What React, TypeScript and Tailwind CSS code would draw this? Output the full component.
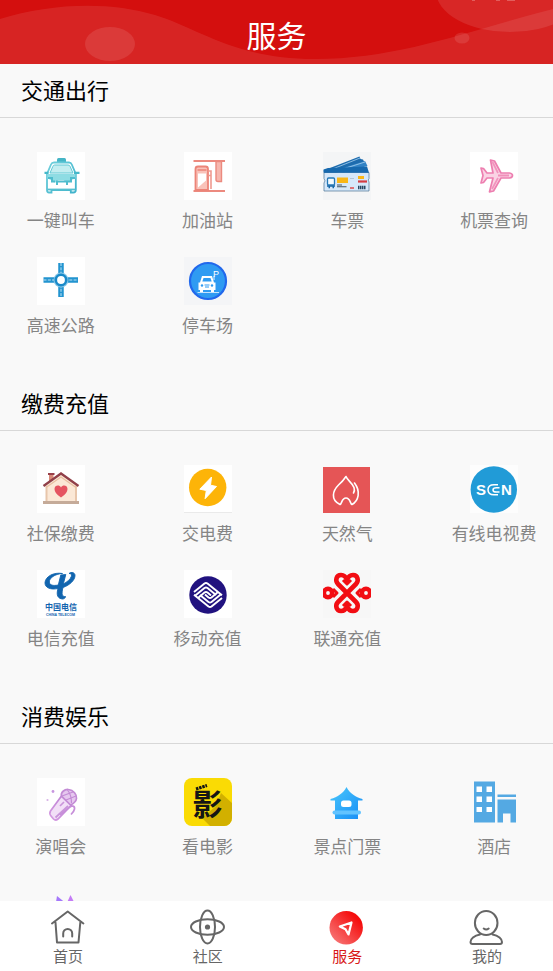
import type { ReactNode } from 'react';

interface Service {
  label?: string;
  icon: ReactNode;
}

interface Section {
  title: string;
  services: Service[];
}

interface IconProps {
  bg?: string;
  children: ReactNode;
}

const Icon = ({ bg = 'none', children }: IconProps) => (
  <svg viewBox="0 0 48 48" className="h-12 w-12 shrink-0" aria-hidden="true">
    <rect width="48" height="48" fill={bg} />
    {children}
  </svg>
);

const TaxiIcon = () => (
  <Icon bg="#fff">
    <defs>
      <linearGradient id="taxi" x1="0" y1="0" x2="1" y2="1">
        <stop offset="0" stopColor="#6fd0dc" />
        <stop offset="1" stopColor="#3fb2cb" />
      </linearGradient>
    </defs>
    <path d="M20 10V7.500q0-1.500 1.500-1.500h6q1.500 0 1.500 1.500V10z" fill="#45b5c6" />
    <path d="M17 10.500h15q2 0 2.800 2l4 9.500v16q0 2.500-2.500 2.500h-2.500V38H14.500v2.500H12q-2 0-2-2.500V22l4-9.500q.800-2 3-2z" fill="#fff" stroke="url(#taxi)" strokeWidth="1.800" />
    <path d="M17.500 13h13.500q1.500 0 2 1.200l3 6.800H13l2.800-6.500q.500-1.500 1.700-1.500z" fill="#c3edf0" stroke="#62c8d5" strokeWidth="1" />
    <path d="M10.500 22h28v4.500l-4.500 1.500v2h-5l-2.500-2h-5l-3 2.500-4.500-1V28l-3.500-1.500z" fill="#8edce3" />
    <path d="M7.500 20.800h4M37 20.800h5.500" stroke="#45b8c9" strokeWidth="2.200" />
    <path d="M11 26h4v3.500h3M38 26h-4v3.500h-3M20 33v-3.500h10V33" fill="none" stroke="#4fbccd" strokeWidth="2" />
    <path d="M10.500 37.500h28" stroke="#55bfd0" strokeWidth="1.800" />
  </Icon>
);

const FuelIcon = () => (
  <Icon bg="#fff">
    <path d="M9.500 9H41M9.500 39H41" stroke="#ec8a7f" strokeWidth="2.200" />
    <path d="M32 9.500h5.500v20H34q-2 0-2-2z" fill="#f6b7ae" stroke="#ec8a7f" strokeWidth="1.400" />
    <path d="M11.500 38V17q0-2.500 2.500-2.500h7.500q2.500 0 2.500 2.500v21z" fill="#f9c2b9" stroke="#ec8478" strokeWidth="1.800" />
    <path d="M14 21.500h8v7l-8 7z" fill="#fff" />
    <path d="M13.500 18h9" stroke="#ed8e83" strokeWidth="1.800" />
    <path d="M24.500 19h2.500v4.500h-2.500M27 24v13" fill="none" stroke="#ef9a90" strokeWidth="1.600" />
  </Icon>
);

const TicketIcon = () => (
  <Icon bg="#f4f5f6">
    <path d="M.500 18.500 36.500 4.500l1 2.500 2.500.500 1.500 3-30 11H1z" fill="#1e6cae" />
    <path d="m13 18 29-9 2.500 5-24 6.500z" fill="#3283c5" />
    <path d="m6 18.500 31-12.500M12 19.500l30-9.500M20 20l23-5" stroke="#a9d2f0" strokeWidth=".8" />
    <path d="M1 20.500h45v6q-1.500 1.500 0 3.500v9H1v-8q2-2 0-4.500z" fill="#d6e8fa" stroke="#4a7294" strokeWidth=".7" />
    <path d="M.500 17.500 5 16l39-1.500 2 6.200H.800z" fill="#1769ae" />
    <rect x="4.500" y="26" width="7" height="7" rx="1" fill="#f2faff" stroke="#2479b8" strokeWidth="1.300" />
    <path d="M4 34h8M5.500 35.500h1.500M9.500 35.500H11" stroke="#1968a8" strokeWidth="1.600" />
    <rect x="14" y="25.500" width="11" height="5.500" fill="#f9b718" />
    <path d="M14 33h5M14 34.700h9.500" stroke="#455766" strokeWidth="1.100" />
    <path d="M27 26.500h4" stroke="#a9bdd0" strokeWidth=".8" />
    <rect x="35" y="24" width="6" height="3" fill="#f9b718" />
    <path d="M35 29.500h9" stroke="#d63c42" strokeWidth="2.200" />
    <path d="M27 36h4" stroke="#dc4d4d" strokeWidth="1.500" />
    <path d="M35 35.500h8" stroke="#284963" strokeWidth="3.500" strokeDasharray="1.500 .5" />
  </Icon>
);

const PlaneIcon = () => (
  <Icon bg="#fff">
    <path d="m20.500 8 4 1 6.500 12h8.500q3 .500 3 2.500t-3 2.500H31l-7.500 13-4 .800L23 26h-6l-3.500 4.500-2.500.500 2-7.500-2-7.500 2.500.500 3.500 4.500h6z" fill="#fad3e4" stroke="#ed7fb0" strokeWidth="1.700" strokeLinejoin="round" />
    <path d="M22.500 10 28 21M22 37l6-11" stroke="#f194bd" strokeWidth="1.700" />
    <path d="M28 23.500h11" stroke="#f08fbb" strokeWidth="2" />
  </Icon>
);

const RoadIcon = () => (
  <Icon bg="#fff">
    <path d="M24 6v34M6.500 23H41" stroke="#2294d0" strokeWidth="5.500" />
    <path d="M24 6v34M6.500 23H41" stroke="#bfe2f3" strokeWidth="1" strokeDasharray="3 1.300" />
    <circle cx="24" cy="23" r="7.500" fill="#8ac8e8" />
    <circle cx="24" cy="23" r="5.200" fill="#fff" stroke="#1a8ac9" strokeWidth="2.600" />
  </Icon>
);

const ParkingIcon = () => (
  <Icon bg="#f4f5f7">
    <circle cx="24" cy="24" r="18" fill="#2f9bf2" stroke="#2168ec" strokeWidth="2.200" />
    <path d="M14.500 25.500h1.500l2-6.500h10l2 6.500h1.500v7.500h-1.500v2.500h-3V33h-8v2.500h-3V33h-1.500z" fill="#fff" />
    <path d="m18.300 24.500 1.200-3.500h7l1.200 3.500z" fill="#2f9bf2" />
    <circle cx="18" cy="28.500" r="1.200" fill="#2f9bf2" />
    <circle cx="28" cy="28.500" r="1.200" fill="#2f9bf2" />
    <path d="M20.500 28h5M21 30h4" stroke="#2f9bf2" strokeWidth="1" />
    <path d="M13.500 35.500H35" stroke="#c4e3ff" strokeWidth="1" />
    <text x="29" y="20" fill="#fff" fontSize="9" fontFamily="'Liberation Sans', sans-serif">P</text>
    <path d="M30 19v4" stroke="#fff" strokeWidth=".9" />
  </Icon>
);

const HouseIcon = () => (
  <Icon bg="#fff">
    <path d="M12 9h4.500v7H12z" fill="#d98a79" />
    <path d="M11 8h6.500v2H11z" fill="#98404a" />
    <path d="M10 20 24 9l14.500 11v16H10z" fill="#fbe8d6" />
    <path d="M9.500 20.500V36M39 20.500V36" stroke="#e8c6ab" strokeWidth="2" />
    <path d="M6.500 21 24 8.500 41.500 21" fill="none" stroke="#914049" strokeWidth="2.300" />
    <path d="M9 22.500 24 12l15 10.500" fill="none" stroke="#e9bfa1" strokeWidth="1.200" />
    <path d="M6 36h36v3H6z" fill="#c5ab99" />
    <path d="M24 32.500q-6.500-4-6.500-8.500c0-4 5-4.500 6.500-1.500 1.500-3 6.500-2.500 6.500 1.500q0 4.500-6.500 8.500z" fill="#e55460" />
  </Icon>
);

const PowerIcon = () => (
  <Icon bg="#fff">
    <path d="M0 47.500h48" stroke="#eaeaea" />
    <circle cx="23.700" cy="22.500" r="18.700" fill="#fdb408" />
    <path d="M27.500 12 15.800 24.200l6.500 1.300-1.200 8.200L32.500 21.500l-6-1.300z" fill="#fff" stroke="#fff" strokeLinejoin="round" />
  </Icon>
);

const GasIcon = () => (
  <Icon>
    <rect y="2" width="47" height="46" fill="#e55556" />
    <path d="M17 39.500c-10-5-7-14-1.500-19.500 3.500-3 5.500-5.500 7.500-8.500 1.500 4 6.500 6.500 8 11 .800 2.500.500 4-.500 5.500M31.500 18c6.500 8.500 4 18-2.500 21.500-2-.500-1.500-6.500-6-6.500s-4 6-6 6.500" fill="none" stroke="#fff" strokeWidth="1.600" strokeLinecap="round" strokeLinejoin="round" />
  </Icon>
);

const CableIcon = () => (
  <Icon bg="#fdfdfd">
    <circle cx="23.800" cy="24.500" r="23.200" fill="#219bd7" />
    <g fill="#fff" fontSize="15" fontWeight="700" fontFamily="'Liberation Sans', sans-serif">
      <text x="6" y="30">S</text>
      <text x="31" y="30">N</text>
    </g>
    <path d="M28 19.800h-4q-6 0-6 5t6 5h4M29.500 22.800h-3q-3.500 0-3.500 2.100t3.500 2.100h3" fill="none" stroke="#fff" strokeWidth="1.500" />
  </Icon>
);

const TelecomIcon = () => (
  <Icon bg="#fff">
    <path d="M25.500 3.500c-9-1.500-17 3-17.500 9-.300 5.500 6 7.500 13 6-2 7 0 10 4.500 10.500 1.500 0 3-1 3-2.500-3 .500-4.500-2-2.500-9 7-2.500 12-7.500 12-12 0-3-3.500-4-6-2 2-.200 3 1 2.300 3-1 3-4.300 5.500-8 7.500l2.500-9.500-5 .500-2.500 10c-5 1-9 .300-9-3 0-4 5.500-8 13.200-8.500z" fill="#1265af" stroke="#1265af" strokeWidth=".9" strokeLinejoin="round" />
    <text x="24" y="40" textAnchor="middle" fill="#1265af" fontSize="8" fontWeight="700" fontFamily="'Noto Sans CJK SC', sans-serif">中国电信</text>
    <text x="23.500" y="46" textAnchor="middle" fill="#1265af" fontSize="3.500" fontWeight="700" fontFamily="'Liberation Sans', sans-serif">CHINA TELECOM</text>
  </Icon>
);

const MobileIcon = () => (
  <Icon bg="#fff">
    <circle cx="24" cy="25" r="18.700" fill="#21127f" />
    <g fill="none" stroke="#fff" strokeWidth="1.900" strokeLinejoin="round">
      <path d="M10 22 20.500 13.500q1.500-1 3 0L38 25.300M11 25.800l9.500-7.800q1.500-1 3 0L32 25M14 27.900l6.500-5.400q1.500-1 3 0L27 25.500" />
      <path d="M38 28 27.500 36.500q-1.500 1-3 0L10 24.700M37 24.200l-9.500 7.800q-1.500 1-3 0L16 25M34 22.100l-6.500 5.400q-1.500 1-3 0L21 24.500" />
    </g>
  </Icon>
);

const UnicomIcon = () => (
  <Icon bg="#f7f7f7">
    <g fill="none" stroke="#f20d13" strokeWidth="4.600" strokeLinejoin="round">
      <path d="M24 23 15 14c-3-3-2-9 3-9 3 0 5 2 6 5 1-3 3-5 6-5 5 0 6 6 3 9L15 32c-3 3-2 9 3 9 3 0 5-2 6-5 1 3 3 5 6 5 5 0 6-6 3-9z" />
      <circle cx="5" cy="23" r="4.200" />
      <circle cx="43" cy="23" r="4.200" />
      <path d="m10 19 4 4-4 4M38 19l-4 4 4 4M20 10l4 4 4-4M20 36l4-4 4 4" strokeWidth="3" />
    </g>
  </Icon>
);

const MicIcon = () => (
  <Icon bg="#fff">
    <defs>
      <linearGradient id="mic" x1="0" y1="1" x2="1" y2="0">
        <stop offset="0" stopColor="#d59ae2" />
        <stop offset="1" stopColor="#b87dd0" />
      </linearGradient>
    </defs>
    <path d="m24.500 18-11 15q-1.500 2.500.500 5l2.500 3q2 2 4.500 0L34.500 27z" fill="#f2dff7" stroke="url(#mic)" strokeWidth="1.700" />
    <path d="m23 28 4-4M18.500 39.500 31 28" stroke="#c994da" strokeWidth="1.700" />
    <path d="M24.500 18c-1-3.500 3-7 7-6.500 5 .500 8.500 5 8 9-.500 4-3 5-6 6.500z" fill="#e6c8ef" stroke="#c38bd5" strokeWidth="1.700" />
    <path d="m25 18 11-4M29 22l10-4M30.500 12q4 5 4 13" fill="none" stroke="#c38bd5" strokeWidth="1.200" />
    <path d="M23 37q6-5 9-7.500c3-2.500 6-1.500 5.500 1.500-.300 2-1.500 3.500-3.500 5.500" fill="none" stroke="#c78fd9" strokeWidth="1.700" />
    <circle cx="16" cy="13.500" r="1.400" fill="#c796df" />
    <circle cx="10.500" cy="22" r="1.100" fill="#d8b2e6" />
  </Icon>
);

const MovieIcon = () => (
  <svg viewBox="0 0 48 48" className="h-12 w-12 shrink-0 rounded-lg" aria-hidden="true">
    <rect width="48" height="48" fill="#fadb04" />
    <path d="m37 15 11 10v23H26l-8-8 14-12z" fill="#d2b000" />
    <text x="23.500" y="37" textAnchor="middle" fill="#151515" fontSize="30" fontWeight="700" fontFamily="'Noto Sans CJK SC', sans-serif">影</text>
    <path d="m12 11 11-3.500" stroke="#151515" strokeWidth="3" strokeDasharray="2.500 .8" />
  </svg>
);

const PavilionIcon = () => (
  <Icon>
    <defs>
      <linearGradient id="pavilion" x1="0" y1="0" x2="1" y2="1">
        <stop offset="0" stopColor="#4bc8fb" />
        <stop offset="1" stopColor="#168cf6" />
      </linearGradient>
    </defs>
    <path d="M23.500 9c3 6 9 10 16 12v1.500H35V41H12V22.500H7.500V21c7-2 13-6 16-12z" fill="url(#pavilion)" />
    <rect x="18" y="22.500" width="10.500" height="6.500" rx="2.500" fill="#fff" />
    <rect x="9.500" y="32.500" width="28.500" height="4" rx="2" fill="#62c3ff" />
  </Icon>
);

const HotelIcon = () => (
  <Icon>
    <path d="M4 3.500h21v41H4zM27.500 16.500H46V19H27.500zM27.500 21.500H46v23h-5.500v-9H33v9h-5.500z" fill="#54a9e3" />
    <path d="M6.500 8.500H12V14H6.500zM16.500 8.500H22V14h-5.500zM6.500 18.500H12V24H6.500zM16.500 18.500H22V24h-5.500zM6.500 29H12v5H6.500zM16.500 29H22v5h-5.500z" fill="#fff" />
  </Icon>
);

const CrownIcon = () => (
  <Icon>
    <path d="m20 13 8 6.500v18H16z" fill="#a578fb" />
    <path d="m33.500 12 5 10v15.500H28V24z" fill="#c47cf6" />
  </Icon>
);

const sections: Section[] = [
  {
    title: '交通出行',
    services: [
      { label: '一键叫车', icon: <TaxiIcon /> },
      { label: '加油站', icon: <FuelIcon /> },
      { label: '车票', icon: <TicketIcon /> },
      { label: '机票查询', icon: <PlaneIcon /> },
      { label: '高速公路', icon: <RoadIcon /> },
      { label: '停车场', icon: <ParkingIcon /> },
    ],
  },
  {
    title: '缴费充值',
    services: [
      { label: '社保缴费', icon: <HouseIcon /> },
      { label: '交电费', icon: <PowerIcon /> },
      { label: '天然气', icon: <GasIcon /> },
      { label: '有线电视费', icon: <CableIcon /> },
      { label: '电信充值', icon: <TelecomIcon /> },
      { label: '移动充值', icon: <MobileIcon /> },
      { label: '联通充值', icon: <UnicomIcon /> },
    ],
  },
  {
    title: '消费娱乐',
    services: [
      { label: '演唱会', icon: <MicIcon /> },
      { label: '看电影', icon: <MovieIcon /> },
      { label: '景点门票', icon: <PavilionIcon /> },
      { label: '酒店', icon: <HotelIcon /> },
      { icon: <CrownIcon /> },
    ],
  },
];

const tabs = [
  {
    label: '首页',
    active: false,
    icon: (
      <>
        <path d="M7.500 15.500 9 35.500h21.500l1.800-20M4 16.500l15.700-12 15.700 12" />
        <path d="M15.200 29.500v-3a4.500 4.500 0 0 1 9 0v3" />
      </>
    ),
  },
  {
    label: '社区',
    active: false,
    icon: (
      <>
        <ellipse cx="19.500" cy="20" rx="16.500" ry="7.800" />
        <ellipse cx="19.500" cy="20" rx="7.500" ry="16.500" />
        <circle cx="19.500" cy="20" r="2.600" fill="currentColor" stroke="none" />
      </>
    ),
  },
  {
    label: '服务',
    active: true,
    icon: (
      <>
        <defs>
          <linearGradient id="tab-active" x1="1" y1="0" x2="0" y2="1">
            <stop offset="0.200" stopColor="#f50d0d" />
            <stop offset="1" stopColor="#f78484" />
          </linearGradient>
        </defs>
        <circle cx="19.200" cy="20.700" r="16.700" fill="url(#tab-active)" stroke="none" />
        <path d="m12.800 19.500 11.700-4-3 12-3-5.200z" stroke="#fff" strokeWidth="2.200" />
      </>
    ),
  },
  {
    label: '我的',
    active: false,
    icon: (
      <>
        <ellipse cx="19.200" cy="16" rx="11.300" ry="12" />
        <path d="M13 27.500C7 28.500 3.500 32 3.500 35q0 2 2 2H33q2 0 2-2c0-3-3.500-6.500-9.500-7.500" />
        <path d="M16.700 21.500q2.500 2 5 0" />
      </>
    ),
  },
];

const Header = () => (
  <header className="relative flex h-16 shrink-0 items-center justify-center overflow-hidden bg-[#d40f0e]">
    <svg viewBox="0 0 553 64" preserveAspectRatio="none" className="absolute inset-0 h-full w-full" aria-hidden="true">
      <g fill="#fff">
        <path d="M0 19C50 3 110 1 155 15S235 59 315 59C400 59 470 30 553 9v55H0z" fillOpacity=".09" />
        <ellipse cx="510" cy="-9" rx="74" ry="41" fillOpacity=".1" />
        <ellipse cx="110" cy="44" rx="25" ry="17" fillOpacity=".1" />
        <ellipse cx="462" cy="38" rx="7.500" ry="5.500" fillOpacity=".1" />
        <path d="M472 0h3M496 0h4M507 0h8" stroke="#fff" strokeOpacity=".5" />
      </g>
    </svg>
    <h1 className="relative pt-1 text-[30px] leading-10 text-white">服务</h1>
  </header>
);

const ServiceSection = ({ title, services }: Section) => (
  <section>
    <h2 className="border-b border-[#d8d8d8] px-[21px] pt-[9px] pb-3 text-[22px] leading-8 text-black">{title}</h2>
    <div className="-mr-[18px] -ml-4 grid grid-cols-[11fr_10fr_10fr_11fr] gap-y-[23px] pt-[34px] pb-[38px]">
      {services.map((service, index) => (
        <button key={index} type="button" className="flex flex-col items-center gap-1.5">
          {service.icon}
          <span className="h-7 text-[17px] leading-7 whitespace-nowrap text-[#858585]">{service.label}</span>
        </button>
      ))}
    </div>
  </section>
);

const TabBar = () => (
  <nav className="flex shrink-0 justify-between bg-white pt-1.5 pr-[46px] pb-1.5 pl-12">
    {tabs.map((tab) => (
      <a
        key={tab.label}
        href="#"
        aria-current={tab.active ? 'page' : undefined}
        className={tab.active ? 'flex flex-col items-center text-[#d81818]' : 'flex flex-col items-center text-[#666]'}
      >
        <svg viewBox="0 0 40 40" className="h-10 w-10" fill="none" stroke="currentColor" strokeWidth="2" strokeLinecap="round" strokeLinejoin="round" aria-hidden="true">
          {tab.icon}
        </svg>
        <span className="text-[15px] leading-[18px]">{tab.label}</span>
      </a>
    ))}
  </nav>
);

export default function App() {
  return (
    <div className="flex h-screen flex-col bg-[#f9f9f9] font-['Noto_Sans_CJK_SC',sans-serif]">
      <Header />
      <main className="min-h-0 flex-1 overflow-x-hidden overflow-y-auto [scrollbar-width:none]">
        {sections.map((section) => (
          <ServiceSection key={section.title} {...section} />
        ))}
      </main>
      <TabBar />
    </div>
  );
}
